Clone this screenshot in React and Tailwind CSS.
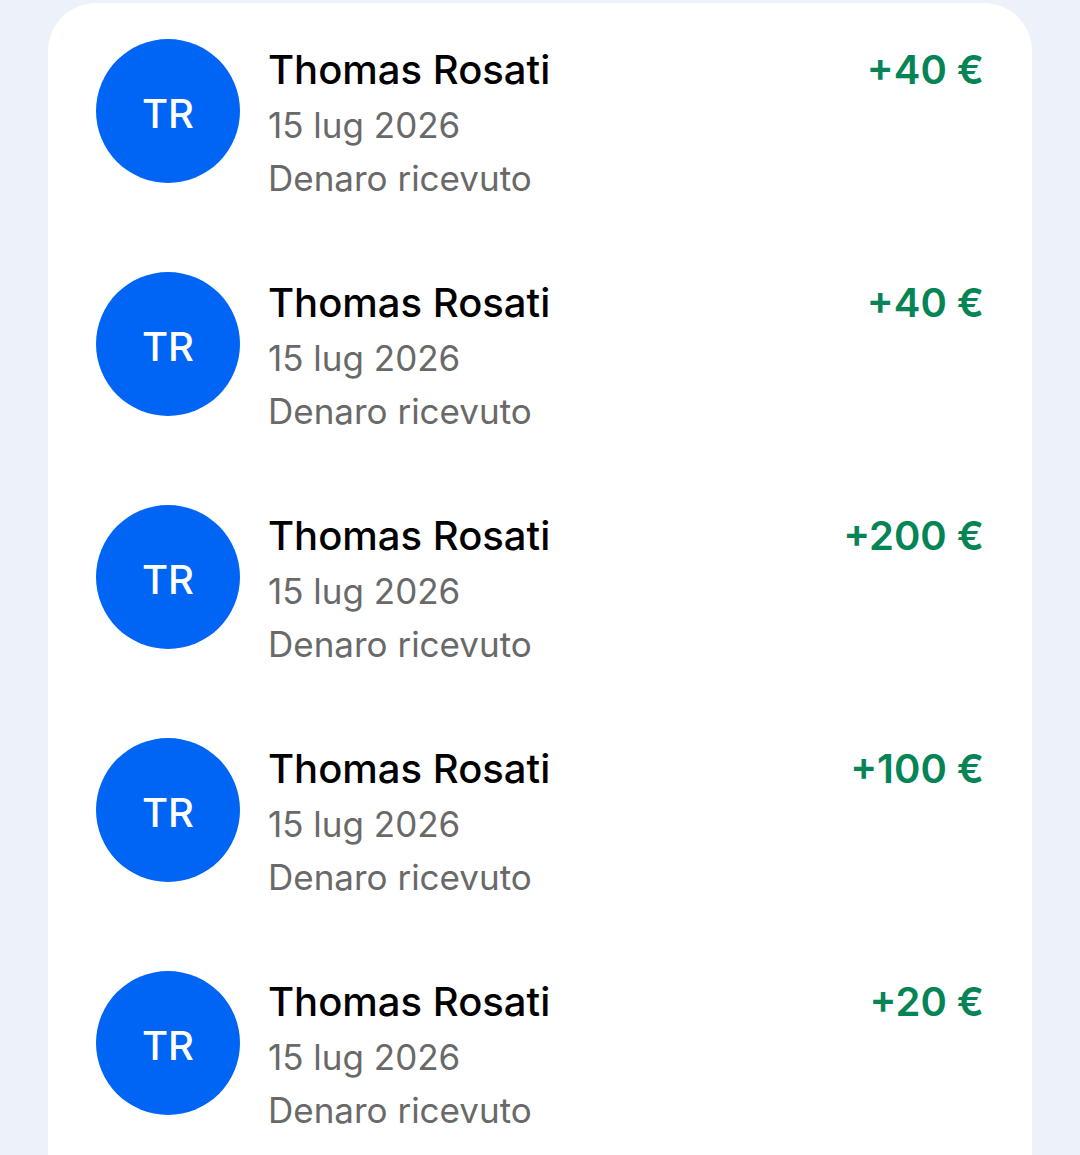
const transactions = [
  { id: 1, name: "Thomas Rosati", date: "15 lug 2026", amount: 40 },
  { id: 2, name: "Thomas Rosati", date: "15 lug 2026", amount: 40 },
  { id: 3, name: "Thomas Rosati", date: "15 lug 2026", amount: 200 },
  { id: 4, name: "Thomas Rosati", date: "15 lug 2026", amount: 100 },
  { id: 5, name: "Thomas Rosati", date: "15 lug 2026", amount: 20 },
];

function getInitials(name) {
  return name
    .split(" ")
    .map((word) => word[0])
    .join("");
}

function Transaction({ name, date, amount }) {
  return (
    <li className="flex items-start gap-7">
      <div className="flex size-36 shrink-0 items-center justify-center rounded-full bg-[#0065f4] pt-1.5 text-[40px] font-medium text-white">
        {getInitials(name)}
      </div>

      <div className="min-w-0 flex-1 pt-1">
        <div className="mb-0.5 flex items-center justify-between gap-4 text-[40px] leading-[54px]">
          <h2 className="font-medium text-black">{name}</h2>
          <span className="font-semibold whitespace-nowrap text-[#058456]">
            +{amount} €
          </span>
        </div>
        <p className="text-[35px] leading-[53px] text-[#696969]">{date}</p>
        <p className="text-[35px] leading-[53px] text-[#696969]">
          Denaro ricevuto
        </p>
      </div>
    </li>
  );
}

export default function App() {
  return (
    <main className="h-screen overflow-hidden bg-[#edf1fa] px-12 pt-[3px] font-['Inter',sans-serif]">
      <ul className="min-h-full space-y-[67px] rounded-t-[48px] bg-white px-12 pt-9">
        {transactions.map((t) => (
          <Transaction
            key={t.id}
            name={t.name}
            date={t.date}
            amount={t.amount}
          />
        ))}
      </ul>
    </main>
  );
}
